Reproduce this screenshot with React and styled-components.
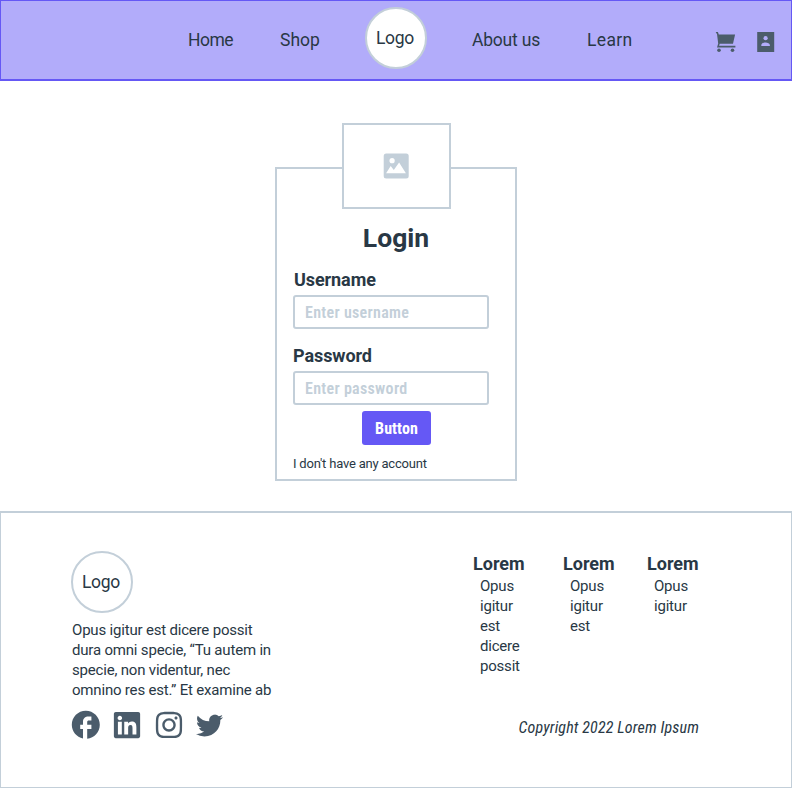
import React from "react";
import styled, { createGlobalStyle } from "styled-components";
import { IoLogoTwitter } from "react-icons/io5";
import { MdFacebook } from "react-icons/md";
import { FaInstagram, FaLinkedin } from "react-icons/fa";

const ink = "#293845";
const slate = "#4b5c6b";
const line = "#c3cfd9";
const violet = "#6558f5";

const GlobalStyle = createGlobalStyle`
  * { box-sizing: border-box; }
  body {
    margin: 0;
    background: #fff;
    color: ${ink};
    font-family: Roboto, "Liberation Sans", sans-serif;
  }
  h1, h2, p, ul { margin: 0; padding: 0; }
`;

const Page = styled.div`
  width: 792px;
  height: 788px;
  display: flex;
  flex-direction: column;
`;

const Header = styled.header`
  height: 81px;
  display: flex;
  align-items: center;
  justify-content: space-between;
  padding: 0 16px 4px 187px;
  background: #b2acfa;
  border: 1px solid ${violet};
  border-bottom-width: 2px;
`;

const Nav = styled.nav`
  display: flex;
  align-items: center;
`;

const NavLink = styled.a`
  width: ${(p) => p.$width}px;
  margin-right: ${(p) => p.$after}px;
  padding-top: 4px;
  font-size: 17.5px;
  line-height: 24px;
  letter-spacing: ${(p) => p.$tracking}px;
  white-space: nowrap;
`;

const Logo = styled.div`
  width: 62px;
  height: 62px;
  flex: none;
  display: flex;
  align-items: center;
  justify-content: center;
  margin-right: ${(p) => p.$after || 0}px;
  padding-right: 2px;
  border: 2px solid ${line};
  border-radius: 50%;
  background: #fff;
  font-size: 17.5px;
  line-height: 24px;
  letter-spacing: -0.3px;
`;

const HeaderIcons = styled.div`
  display: flex;
  gap: 20px;
  padding-top: 8px;
  color: ${slate};
  svg { display: block; }
`;

const Main = styled.main`
  height: 430px;
  display: flex;
  flex-direction: column;
  align-items: center;
  padding-top: 86px;
`;

const Card = styled.form`
  width: 242px;
  height: 314px;
  display: flex;
  flex-direction: column;
  padding: 0 16px;
  border: 2px solid ${line};
`;

const Picture = styled.div`
  width: 109px;
  height: 86px;
  flex: none;
  align-self: center;
  display: flex;
  align-items: center;
  justify-content: center;
  margin-top: -46px;
  border: 2px solid ${line};
  background: #fff;
`;

const Title = styled.h1`
  margin-top: 13px;
  font-size: 26.5px;
  line-height: 32px;
  font-weight: 700;
  text-align: center;
`;

const Label = styled.label`
  margin-top: ${(p) => p.$before}px;
  padding-left: ${(p) => p.$inset || 0}px;
  font-size: 18px;
  line-height: 24px;
  font-weight: 700;
  letter-spacing: -0.08px;
`;

const Input = styled.input`
  width: 196px;
  height: 34px;
  margin: 3px 0 0;
  padding: 0 10px;
  border: 2px solid ${line};
  border-radius: 3px;
  background: #fff;
  font-family: inherit;
  font-size: 16px;
  font-weight: 600;
  font-stretch: 75%;
  letter-spacing: 0.3px;
  &::placeholder { color: ${line}; opacity: 1; }
`;

const Button = styled.button`
  width: 69px;
  height: 34px;
  align-self: center;
  margin-top: 6px;
  padding: 0 0 0 1px;
  border: 0;
  border-radius: 3px;
  background: ${violet};
  color: #fff;
  font-family: inherit;
  font-size: 16px;
  font-weight: 700;
  font-stretch: 75%;
  letter-spacing: 0.1px;
`;

const Hint = styled.a`
  margin-top: 9px;
  font-size: 13px;
  line-height: 20px;
  letter-spacing: -0.2px;
`;

const Footer = styled.footer`
  height: 277px;
  display: flex;
  justify-content: space-between;
  padding: 38px 92px 0 70px;
  border: 1px solid ${line};
  border-top-width: 2px;
`;

const About = styled.section`
  width: 215px;
`;

const Blurb = styled.p`
  padding: 7px 0 0 1px;
  font-size: 15px;
  line-height: 20px;
`;

const BlurbLine = styled.span`
  display: block;
  white-space: nowrap;
  letter-spacing: -0.19px;
`;

const Socials = styled.div`
  display: grid;
  grid-template-columns: repeat(4, 41.3px);
  height: 34px;
  place-items: center;
  margin: 8px 0 0 -5.65px;
  color: ${slate};
  svg { display: block; }
`;

const Links = styled.section`
  width: 226px;
  display: flex;
  flex-direction: column;
`;

const Columns = styled.div`
  height: 165px;
  display: grid;
  grid-template-columns: 90px 84px 52px;
  padding-top: 1px;
`;

const Heading = styled.h2`
  font-size: 18px;
  line-height: 24px;
`;

const List = styled.ul`
  padding-left: 7px;
  list-style: none;
  font-size: 15px;
  line-height: 20px;
  letter-spacing: -0.2px;
`;

const Copyright = styled.p`
  align-self: flex-end;
  font-size: 16px;
  line-height: 24px;
  font-style: italic;
  font-stretch: 75%;
  letter-spacing: 0.14px;
  white-space: nowrap;
`;

const columns = [
  ["Opus", "igitur", "est", "dicere", "possit"],
  ["Opus", "igitur", "est"],
  ["Opus", "igitur"],
];

const CartIcon = () => (
  <svg width="22" height="22" viewBox="0 0 22 22" fill="currentColor">
    <path d="M.7 1h2.2l.9 2.6H20.1L18 12.7H4.7L4.1 14.7H20.4v1.7H2L3.2 12.6 2 3.1 1.2 2Z" />
    <circle cx="4" cy="19.3" r="1.8" />
    <circle cx="17.5" cy="19.3" r="1.8" />
  </svg>
);

const ContactIcon = () => (
  <svg width="18" height="22" viewBox="0 0 18 22">
    <path fill="currentColor" d="M.2 1h17v20H.2z" />
    <circle cx="8.6" cy="7.2" r="2.1" fill="#b2acfa" />
    <path fill="#b2acfa" d="M4.3 15v-.8c0-1.9 2.4-2.8 4.3-2.8s4.3.9 4.3 2.8v.8z" />
  </svg>
);

const PictureIcon = () => (
  <svg width="26" height="26" viewBox="0 0 26 26">
    <rect x=".7" y=".5" width="25" height="25" rx="2.5" fill={line} />
    <circle cx="9.1" cy="7.7" r="2.6" fill="#fff" />
    <path fill="#fff" d="M3.1 20.3 7.7 13l3.1 4 5.3-7.5 6.8 10.8z" />
  </svg>
);

export default function App() {
  return (
    <Page>
      <GlobalStyle />
      <Header>
        <Nav>
          <NavLink $width={46} $after={46} $tracking={-0.5}>Home</NavLink>
          <NavLink $width={40} $after={45} $tracking={0}>Shop</NavLink>
          <Logo $after={45}>Logo</Logo>
          <NavLink $width={69} $after={46} $tracking={-0.2}>About us</NavLink>
          <NavLink $width={46} $after={0} $tracking={0.35}>Learn</NavLink>
        </Nav>
        <HeaderIcons>
          <CartIcon />
          <ContactIcon />
        </HeaderIcons>
      </Header>
      <Main>
        <Card>
          <Picture><PictureIcon /></Picture>
          <Title>Login</Title>
          <Label $before={14} $inset={1}>Username</Label>
          <Input placeholder="Enter username" />
          <Label $before={15}>Password</Label>
          <Input placeholder="Enter password" />
          <Button type="button">Button</Button>
          <Hint>I don't have any account</Hint>
        </Card>
      </Main>
      <Footer>
        <About>
          <Logo>Logo</Logo>
          <Blurb>
            <BlurbLine>Opus igitur est dicere possit</BlurbLine>
            <BlurbLine>dura omni specie, “Tu autem in</BlurbLine>
            <BlurbLine>specie, non videntur, nec</BlurbLine>
            <BlurbLine>omnino res est.” Et examine ab</BlurbLine>
          </Blurb>
          <Socials>
            <MdFacebook size={33.6} />
            <FaLinkedin size={30} />
            <FaInstagram size={30} />
            <IoLogoTwitter size={29} />
          </Socials>
        </About>
        <Links>
          <Columns>
            {columns.map((items, i) => (
              <div key={i}>
                <Heading>Lorem</Heading>
                <List>
                  {items.map((item) => <li key={item}>{item}</li>)}
                </List>
              </div>
            ))}
          </Columns>
          <Copyright>Copyright 2022 Lorem Ipsum</Copyright>
        </Links>
      </Footer>
    </Page>
  );
}
